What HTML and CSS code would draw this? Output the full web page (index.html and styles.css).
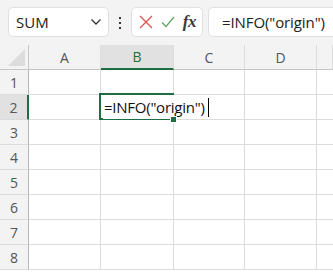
FILE: index.html
```html
<!DOCTYPE html>
<html>
<head>
    <title>Sheet</title>
    <link rel="stylesheet" href="styles.css">
</head>
<body>
    <div class="toolbar">
        <div class="name-box">
            <span class="name-text">SUM</span>
            <svg class="chevron" width="12" height="8" viewBox="0 0 12 8">
                <path d="M1.5 1.5 L6 6 L10.5 1.5" fill="none" stroke="#333" stroke-width="1.3"/>
            </svg>
        </div>
        <div class="dots">
            <span></span><span></span><span></span>
        </div>
        <div class="icon-box">
            <svg width="14" height="14" viewBox="0 0 14 14">
                <path d="M1 1 L13 13 M13 1 L1 13" stroke="#d9534f" stroke-width="1.3"/>
            </svg>
            <svg width="14" height="12" viewBox="0 0 14 12">
                <path d="M1 6.5 L5 10.5 L13 1" fill="none" stroke="#5ea668" stroke-width="1.3"/>
            </svg>
            <span class="fx">fx</span>
        </div>
        <div class="formula-box">=INFO("origin")</div>
    </div>

    <div class="sheet">
        <div class="corner"><div class="triangle"></div></div>
        <div class="col-head">A</div>
        <div class="col-head active">B</div>
        <div class="col-head">C</div>
        <div class="col-head">D</div>
        <div class="col-head last"></div>

        <div class="row-head">1</div>
        <div class="cell"></div><div class="cell"></div><div class="cell"></div><div class="cell"></div><div class="cell last"></div>

        <div class="row-head active">2</div>
        <div class="cell"></div>
        <div class="cell editing">
            <span class="entry">=INFO("origin")<span class="caret"></span></span>
            <div class="handle"></div>
        </div>
        <div class="cell"></div><div class="cell"></div><div class="cell last"></div>

        <div class="row-head">3</div>
        <div class="cell"></div><div class="cell"></div><div class="cell"></div><div class="cell"></div><div class="cell last"></div>
        <div class="row-head">4</div>
        <div class="cell"></div><div class="cell"></div><div class="cell"></div><div class="cell"></div><div class="cell last"></div>
        <div class="row-head">5</div>
        <div class="cell"></div><div class="cell"></div><div class="cell"></div><div class="cell"></div><div class="cell last"></div>
        <div class="row-head">6</div>
        <div class="cell"></div><div class="cell"></div><div class="cell"></div><div class="cell"></div><div class="cell last"></div>
        <div class="row-head">7</div>
        <div class="cell"></div><div class="cell"></div><div class="cell"></div><div class="cell"></div><div class="cell last"></div>
        <div class="row-head">8</div>
        <div class="cell"></div><div class="cell"></div><div class="cell"></div><div class="cell"></div><div class="cell last"></div>
    </div>
</body>
</html>
```

FILE: styles.css
```css
body {
    margin: 0;
    background-color: #ffffff;
    font-family: "Open Sans", "Noto Sans", sans-serif;
    overflow: hidden;
}

.toolbar {
    display: flex;
    align-items: center;
    height: 45px;
    padding: 0 0 0 8px;
    box-sizing: border-box;
    background-color: #f3f3f3;
    overflow: hidden;
}

.toolbar > * {
    flex: none;
}

.name-box {
    display: flex;
    align-items: center;
    justify-content: space-between;
    width: 101px;
    height: 30px;
    box-sizing: border-box;
    padding: 0 6px 0 7px;
    background-color: white;
    border: 1px solid #e0e0e0;
    border-radius: 5px;
    margin-top: -1px;
}

.name-text {
    font-size: 15px;
    color: #222;
}

.dots {
    display: flex;
    flex-direction: column;
    align-items: center;
    gap: 3px;
    width: 22px;
}

.dots span {
    width: 2px;
    height: 2px;
    background-color: #333;
}

.icon-box {
    display: flex;
    align-items: center;
    justify-content: space-between;
    width: 72px;
    height: 30px;
    box-sizing: border-box;
    padding: 0 6px 0 7px;
    background-color: white;
    border: 1px solid #e0e0e0;
    border-radius: 5px;
    margin-top: -1px;
}

.fx {
    font-family: "Liberation Serif", "DejaVu Serif", serif;
    font-style: italic;
    font-weight: bold;
    font-size: 17px;
    color: #3a3a3a;
    letter-spacing: -0.5px;
}

.formula-box {
    width: 160px;
    height: 30px;
    box-sizing: border-box;
    margin-left: 5px;
    margin-top: -1px;
    padding: 4px 0 0 13px;
    background-color: white;
    border: 1px solid #e0e0e0;
    border-radius: 5px;
    font-size: 15px;
    color: #222;
    white-space: nowrap;
    letter-spacing: -0.1px;
}

.sheet {
    display: grid;
    grid-template-columns: 29px 72px 73px 71px 72px 1fr;
    grid-auto-rows: 25px;
}

.corner, .col-head, .row-head {
    background-color: #f3f3f3;
    color: #555;
    font-size: 14px;
    box-sizing: border-box;
}

.corner {
    position: relative;
    border-right: 1px solid #c6c6c6;
    border-bottom: 1px solid #c6c6c6;
}

.triangle {
    position: absolute;
    right: 3px;
    bottom: 3px;
    width: 0;
    height: 0;
    border-left: 17px solid transparent;
    border-bottom: 17px solid #dcdcdc;
}

.col-head {
    display: flex;
    align-items: center;
    justify-content: center;
    border-right: 1px solid #dcdcdc;
    border-bottom: 1px solid #c6c6c6;
}

.col-head.active {
    background-color: #e1e1e1;
    color: #1e6e42;
    border-bottom: 2px solid #1e6e42;
}

.row-head {
    display: flex;
    align-items: center;
    justify-content: center;
    border-right: 1px solid #b8b8b8;
    border-bottom: 1px solid #dcdcdc;
}

.row-head.active {
    background-color: #e1e1e1;
    border-right: 2px solid #1e6e42;
}

.cell {
    box-sizing: border-box;
    border-right: 1px solid #dcdcdc;
    border-bottom: 1px solid #dcdcdc;
}

.cell.last {
    border-right: none;
}

.editing {
    position: relative;
    z-index: 2;
}

.editing::before {
    content: "";
    position: absolute;
    left: -2px;
    top: -2px;
    right: -1px;
    bottom: -1px;
    border: 2px solid #1e6e42;
}

.entry {
    position: absolute;
    left: 2px;
    top: 0;
    height: 24px;
    padding: 1px 4px 0 1px;
    box-sizing: border-box;
    background-color: white;
    font-size: 15px;
    color: #111;
    white-space: nowrap;
    line-height: 22px;
    letter-spacing: -0.25px;
}

.caret {
    display: inline-block;
    width: 1px;
    height: 19px;
    margin-left: 3px;
    vertical-align: -4px;
    background-color: black;
}

.handle {
    position: absolute;
    right: -4px;
    bottom: -4px;
    width: 5px;
    height: 5px;
    background-color: #1e6e42;
    border: 1px solid white;
}
```
